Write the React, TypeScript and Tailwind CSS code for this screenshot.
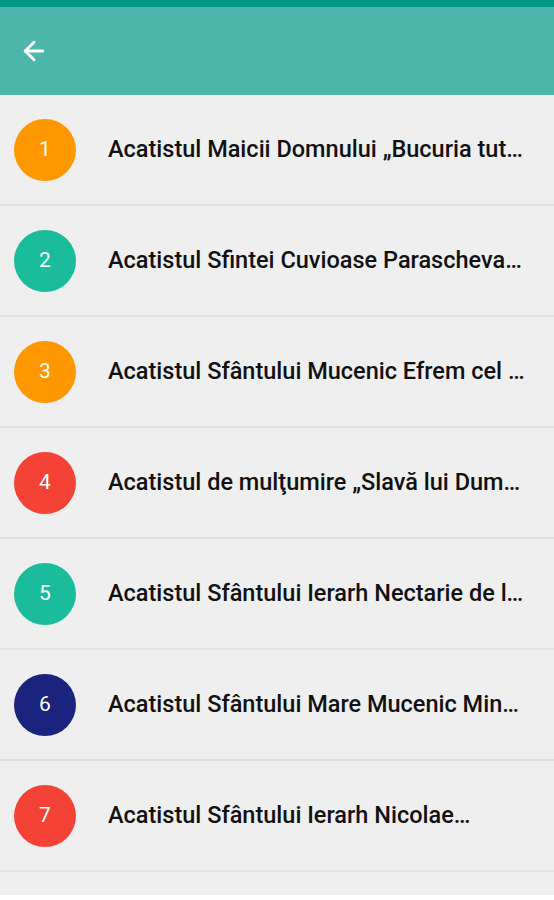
import { ArrowLeft } from "lucide-react";

const items = [
  { n: 1, color: "bg-[#ff9800]", title: "Acatistul Maicii Domnului „Bucuria tut…" },
  { n: 2, color: "bg-[#1abc9c]", title: "Acatistul Sfintei Cuvioase Parascheva…" },
  { n: 3, color: "bg-[#ff9800]", title: "Acatistul Sfântului Mucenic Efrem cel …" },
  { n: 4, color: "bg-[#f44336]", title: "Acatistul de mulţumire „Slavă lui Dum…" },
  { n: 5, color: "bg-[#1abc9c]", title: "Acatistul Sfântului Ierarh Nectarie de l…" },
  { n: 6, color: "bg-[#1a237e]", title: "Acatistul Sfântului Mare Mucenic Min…" },
  { n: 7, color: "bg-[#f44336]", title: "Acatistul Sfântului Ierarh Nicolae…" },
];

export default function App() {
  return (
    <div
      className="h-[900px] w-[554px] overflow-hidden bg-[#efefef] flex flex-col"
      style={{ fontFamily: "Roboto, 'Noto Sans', sans-serif" }}
    >
      <div className="h-[7px] bg-[#009688] shrink-0" />
      <div className="h-[88px] bg-[#4db6ac] flex items-center px-[19px] shrink-0">
        <ArrowLeft className="w-[30px] h-[30px] text-white" strokeWidth={2.4} />
      </div>
      <div className="flex-1 flex flex-col">
        {items.map((it) => (
          <div
            key={it.n}
            className="h-[111px] shrink-0 flex items-center border-b-2 border-[#e2e2e2]"
          >
            <div
              className={`${it.color} ml-[14px] w-[62px] h-[62px] rounded-full flex items-center justify-center text-white text-[21px] shrink-0`}
            >
              {it.n}
            </div>
            <div className="ml-[32px] text-[23.5px] font-medium text-[#111] whitespace-nowrap overflow-hidden">
              {it.title}
            </div>
          </div>
        ))}
      </div>
      <div className="h-[5px] bg-white shrink-0" />
    </div>
  );
}
